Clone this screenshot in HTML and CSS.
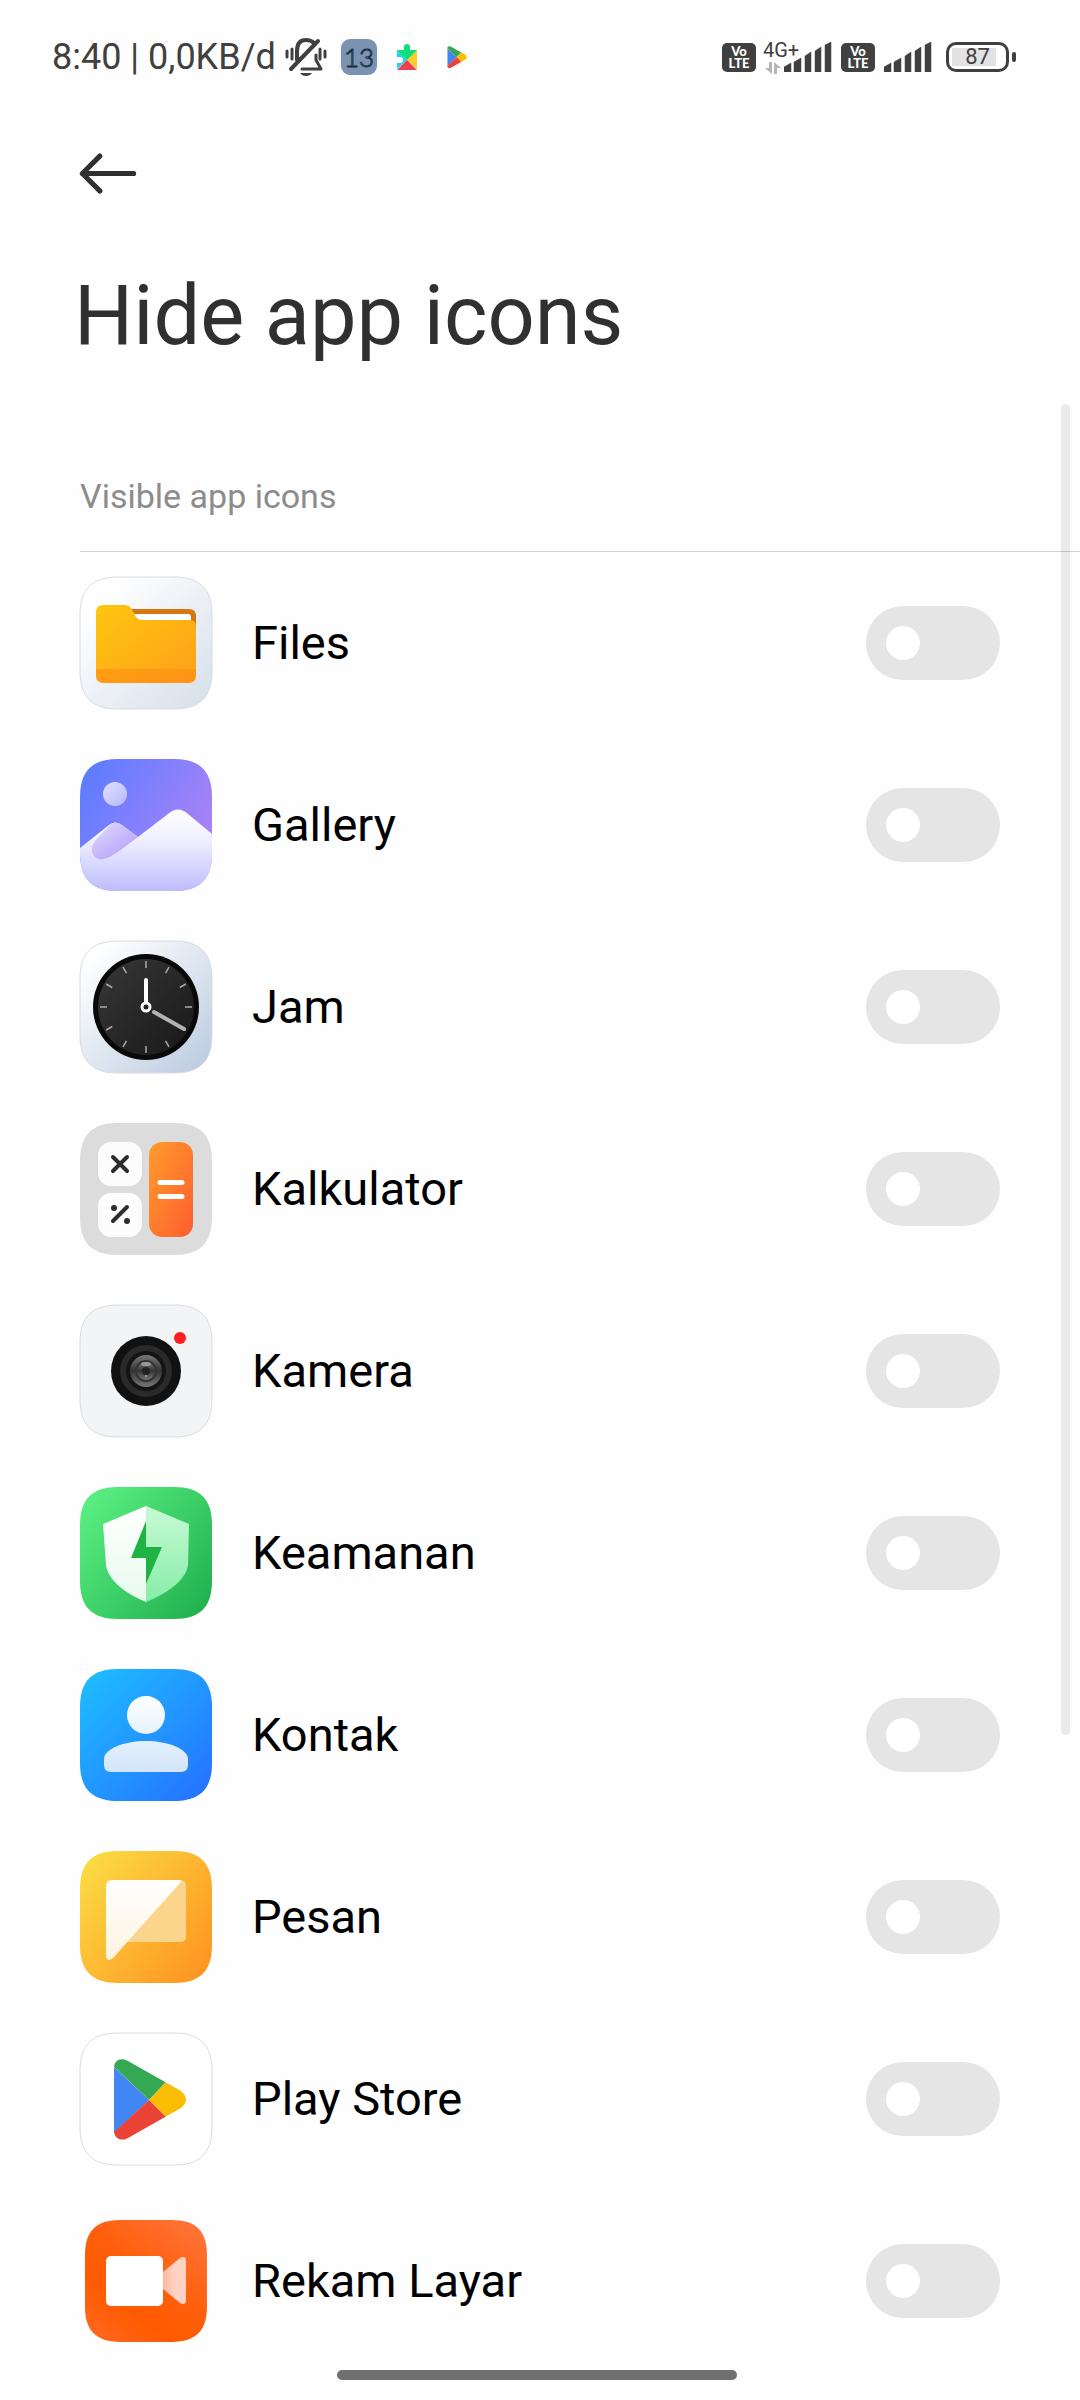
FILE: index.html
```html
<!DOCTYPE html>
<html lang="en">
<head>
  <meta charset="UTF-8" />
  <meta name="viewport" content="width=device-width, initial-scale=1.0" />
  <title>Hide app icons</title>
  <link rel="stylesheet" href="styles.css">
</head>
<body>
  <!-- Shared icon shapes -->
  <svg class="defs" aria-hidden="true">
    <defs>
      <path id="tile" d="M0 38C0 12 12 0 38 0H94C120 0 132 12 132 38V94C132 120 120 132 94 132H38C12 132 0 120 0 94Z" />
      <clipPath id="tileClip"><use href="#tile" /></clipPath>
      <clipPath id="playClip">
        <path d="M34 35C34 27 41 24 48 28L101 58Q111 66.500 101 75L48 105C41 109 34 105 34 98Z" />
      </clipPath>
      <symbol id="play" viewBox="30 22 80 88">
        <g clip-path="url(#playClip)">
          <path d="M34 34L69 67L34 100Z" fill="#4285f4" />
          <path d="M30 22H60L86 49L69 67L30 30Z" fill="#34a853" />
          <path d="M86 49H115V84H86L69 67Z" fill="#fbbc04" />
          <path d="M69 67L86 84L60 112H30V103Z" fill="#ea4335" />
        </g>
      </symbol>
      <symbol id="signal" viewBox="0 0 48 30">
        <path d="M0 30V25L7 21V30ZM10 30V20L17 16V30ZM21 30V14L27 10V30ZM31 30V9L37 5V30ZM41 30V3L47 0V30Z" fill="#404040" stroke="#404040" stroke-width="0.500" stroke-linejoin="round" />
      </symbol>
    </defs>
  </svg>

  <div class="status-bar">
    <div class="status-left">
      <span class="clock">8:40 | 0,0KB/d</span>
      <svg class="bell" viewBox="0 0 42 38" fill="none" stroke="#404040" stroke-width="4" stroke-linecap="round">
        <path d="M6 31L33 3" />
        <path d="M12 22V13C12 5 16 2 21 2C25 2 27 3 29 5" />
        <path d="M31 17V22L36 31H17" stroke-linejoin="round" stroke-width="3" />
        <path d="M15 35H27Q25 38 21 38Q17 38 15 35Z" fill="#404040" stroke="none" />
        <path d="M2 13V19M7 11V21M35 11V21M40 13V19" stroke-width="3" />
      </svg>
      <svg class="thirteen" viewBox="0 0 36 36">
        <rect width="36" height="36" rx="9" fill="#7b92b3" />
        <text x="18" y="28" text-anchor="middle" class="thirteen-text">13</text>
      </svg>
      <svg class="services" viewBox="0 0 22 26">
        <path d="M1 6H8V3A3 3 0 0 1 14 3V6H21V16L11 16L1 7Z" fill="#0fe07c" />
        <path d="M1 7L11 16L1 25V19H4A3 3 0 0 0 4 13H1Z" fill="#18d5f5" />
        <path d="M21 6V25L11 16Z" fill="#ffca2b" />
        <path d="M11 16L21 26H1Z" fill="#ee3f4e" />
      </svg>
      <svg class="play-small"><use href="#play" /></svg>
    </div>
    <div class="status-right">
      <span class="volte">Vo<br>LTE</span>
      <div class="network">
        <span class="network-type">4G+</span>
        <svg class="arrows" viewBox="0 0 16 12" fill="#b5b5b5">
          <path d="M7 0V12L0 6H4V0ZM9 12V0L16 6H12V12Z" />
        </svg>
      </div>
      <svg class="signal signal-first"><use href="#signal" /></svg>
      <span class="volte">Vo<br>LTE</span>
      <svg class="signal"><use href="#signal" /></svg>
      <div class="battery"><span class="battery-level">87</span></div>
    </div>
  </div>

  <header>
    <button class="back" type="button" aria-label="Back">
      <svg viewBox="0 0 56 40" fill="none" stroke="#303030" stroke-width="5" stroke-linecap="round" stroke-linejoin="round">
        <path d="M20 3L3 20L20 37M3 20H53" />
      </svg>
    </button>
    <h1>Hide app icons</h1>
  </header>

  <main>
    <h2>Visible app icons</h2>
    <ul class="app-list">
      <li>
        <label class="app">
          <svg class="app-icon" viewBox="0 0 132 132">
            <linearGradient id="filesBg" x1="0" y1="0" x2="1" y2="1"><stop offset="0.150" stop-color="#fff" /><stop offset="1" stop-color="#d5deea" /></linearGradient>
            <linearGradient id="folder" x1="0" y1="0" x2="1" y2="1"><stop offset="0" stop-color="#fdc60f" /><stop offset="1" stop-color="#ffa01b" /></linearGradient>
            <use href="#tile" fill="url(#filesBg)" class="outline" />
            <path d="M48 32H109Q116 32 116 39V60H48Z" fill="#d67713" />
            <path d="M52 37H108Q111 37 111 40V60H52Z" fill="#fff" />
            <path d="M16 35Q16 28 24 28H45Q49 28 51 31L56 40Q58 43 61 43H110Q116 43 116 50V98Q116 106 108 106H24Q16 106 16 98Z" fill="url(#folder)" />
            <path d="M16 92H116V98Q116 106 108 106H24Q16 106 16 98Z" fill="#ff8c14" fill-opacity="0.600" />
          </svg>
          <span class="app-name">Files</span>
          <input class="toggle" type="checkbox" role="switch">
        </label>
      </li>
      <li>
        <label class="app">
          <svg class="app-icon" viewBox="0 0 132 132">
            <linearGradient id="sky" x1="0" y1="0.100" x2="1" y2="0.700"><stop offset="0" stop-color="#5a7cff" /><stop offset="0.500" stop-color="#8580fc" /><stop offset="1" stop-color="#b083f5" /></linearGradient>
            <linearGradient id="sun" x1="0" y1="0" x2="1" y2="1"><stop offset="0" stop-color="#dfe3ff" /><stop offset="1" stop-color="#b8b5fd" /></linearGradient>
            <linearGradient id="snow" x1="0" y1="0" x2="0" y2="1"><stop offset="0" stop-color="#fff" /><stop offset="0.400" stop-color="#eeeeff" /><stop offset="1" stop-color="#bdbcfd" /></linearGradient>
            <linearGradient id="hill" x1="0" y1="0" x2="0.800" y2="1"><stop offset="0" stop-color="#e0dcff" /><stop offset="1" stop-color="#b49efb" /></linearGradient>
            <g clip-path="url(#tileClip)">
              <rect width="132" height="132" fill="url(#sky)" />
              <circle cx="35" cy="35" r="12" fill="url(#sun)" />
              <path d="M0 89L29 66Q35 61 42 66L58 78L88 55Q98 46 108 55L132 75V132H0Z" fill="url(#snow)" />
              <path d="M15 82L29 67Q35 61 42 66L58 78L42 90C31 98 25 101 19 100C11 98 10 88 15 82Z" fill="url(#hill)" />
            </g>
          </svg>
          <span class="app-name">Gallery</span>
          <input class="toggle" type="checkbox" role="switch">
        </label>
      </li>
      <li>
        <label class="app">
          <svg class="app-icon" viewBox="0 0 132 132">
            <linearGradient id="clockBg" x1="0" y1="0" x2="1" y2="1"><stop offset="0.100" stop-color="#fff" /><stop offset="1" stop-color="#b9c9df" /></linearGradient>
            <linearGradient id="face" x1="0" y1="0" x2="1" y2="1"><stop offset="0" stop-color="#373737" /><stop offset="1" stop-color="#181818" /></linearGradient>
            <use href="#tile" fill="url(#clockBg)" class="outline" />
            <circle cx="66" cy="66" r="53" fill="#090909" />
            <circle cx="66" cy="66" r="48" fill="url(#face)" />
            <g stroke="#aaa" stroke-width="1.500">
              <path id="ticks" d="M66 20V27M66 105V112M20 66H27M105 66H112" />
              <use href="#ticks" transform="rotate(30 66 66)" />
              <use href="#ticks" transform="rotate(60 66 66)" />
            </g>
            <path d="M74 71L104 88" stroke="#b4b4b4" stroke-width="4" stroke-linecap="round" />
            <path d="M66 62V39" stroke="#fff" stroke-width="4" stroke-linecap="round" />
            <circle cx="66" cy="66" r="4" fill="#222" stroke="#fff" stroke-width="3" />
          </svg>
          <span class="app-name">Jam</span>
          <input class="toggle" type="checkbox" role="switch">
        </label>
      </li>
      <li>
        <label class="app">
          <svg class="app-icon" viewBox="0 0 132 132">
            <linearGradient id="equals" x1="0" y1="0" x2="1" y2="1"><stop offset="0" stop-color="#ff9c2c" /><stop offset="1" stop-color="#ff5d2f" /></linearGradient>
            <use href="#tile" fill="#dcdcdc" />
            <rect x="18" y="19" width="44" height="44" rx="13" fill="#fcfcfc" />
            <rect x="18" y="70" width="44" height="44" rx="13" fill="#fcfcfc" />
            <rect x="69" y="19" width="44" height="95" rx="13" fill="url(#equals)" />
            <path d="M80 59.500H102M80 73.500H102" stroke="#fff" stroke-width="5" stroke-linecap="round" />
            <path d="M33 34L47 48M47 34L33 48M33 98L47 84" stroke="#2d2d2d" stroke-width="4" stroke-linecap="round" />
            <circle cx="34" cy="85" r="3" fill="#2d2d2d" />
            <circle cx="47" cy="98" r="3" fill="#2d2d2d" />
          </svg>
          <span class="app-name">Kalkulator</span>
          <input class="toggle" type="checkbox" role="switch">
        </label>
      </li>
      <li>
        <label class="app">
          <svg class="app-icon" viewBox="0 0 132 132">
            <linearGradient id="glass" x1="0" y1="0" x2="0" y2="1"><stop offset="0" stop-color="#777" /><stop offset="0.500" stop-color="#333" /><stop offset="1" stop-color="#777" /></linearGradient>
            <use href="#tile" fill="#f3f4f6" class="outline" />
            <circle cx="66" cy="66" r="35" fill="#111" />
            <circle cx="66" cy="66" r="26" fill="#2a2a2a" />
            <circle cx="66" cy="66" r="20" fill="#141414" />
            <circle cx="66" cy="66" r="16" fill="url(#glass)" />
            <circle cx="66" cy="66" r="11" fill="#333" />
            <circle cx="66" cy="66" r="9" fill="url(#glass)" />
            <circle cx="66" cy="66" r="4" fill="#222" />
            <ellipse cx="66" cy="59" rx="5" ry="2" fill="#999" />
            <circle cx="66" cy="71" r="1" fill="#aaa" />
            <circle cx="100" cy="33" r="6" fill="#ff1d1d" />
          </svg>
          <span class="app-name">Kamera</span>
          <input class="toggle" type="checkbox" role="switch">
        </label>
      </li>
      <li>
        <label class="app">
          <svg class="app-icon" viewBox="0 0 132 132">
            <linearGradient id="securityBg" x1="0" y1="0.100" x2="1" y2="0.900"><stop offset="0" stop-color="#5cf083" /><stop offset="1" stop-color="#20b04e" /></linearGradient>
            <linearGradient id="shieldLeft" x1="0" y1="0" x2="0" y2="1"><stop offset="0" stop-color="#fff" /><stop offset="1" stop-color="#e8faee" /></linearGradient>
            <linearGradient id="shieldRight" x1="0" y1="0" x2="0" y2="1"><stop offset="0" stop-color="#c8fad5" /><stop offset="1" stop-color="#86eda7" /></linearGradient>
            <use href="#tile" fill="url(#securityBg)" />
            <path d="M66 19L23 37L26 78C28 94 48 108 66 115Z" fill="url(#shieldLeft)" />
            <path d="M66 19L109 37L108 78C106 94 84 108 66 115Z" fill="url(#shieldRight)" />
            <path d="M66 34L51 71H66V97L82 60H66Z" fill="#1fb344" />
          </svg>
          <span class="app-name">Keamanan</span>
          <input class="toggle" type="checkbox" role="switch">
        </label>
      </li>
      <li>
        <label class="app">
          <svg class="app-icon" viewBox="0 0 132 132">
            <linearGradient id="contactBg" x1="0" y1="0" x2="1" y2="1"><stop offset="0" stop-color="#1ec0ff" /><stop offset="1" stop-color="#256fff" /></linearGradient>
            <linearGradient id="head" x1="0" y1="0" x2="0" y2="1"><stop offset="0" stop-color="#fff" /><stop offset="1" stop-color="#e6f2fd" /></linearGradient>
            <linearGradient id="shoulders" x1="0" y1="0" x2="0" y2="1"><stop offset="0" stop-color="#e3f0fc" /><stop offset="1" stop-color="#d3e5fb" /></linearGradient>
            <use href="#tile" fill="url(#contactBg)" />
            <circle cx="66" cy="46" r="19" fill="url(#head)" />
            <path d="M24 90C24 80 44 72 66 72C88 72 108 80 108 90V96Q108 103 101 103H31Q24 103 24 96Z" fill="url(#shoulders)" />
          </svg>
          <span class="app-name">Kontak</span>
          <input class="toggle" type="checkbox" role="switch">
        </label>
      </li>
      <li>
        <label class="app">
          <svg class="app-icon" viewBox="0 0 132 132">
            <linearGradient id="messageBg" x1="0" y1="0.100" x2="1" y2="0.900"><stop offset="0" stop-color="#fbdc44" /><stop offset="1" stop-color="#ff9320" /></linearGradient>
            <linearGradient id="fold" x1="0" y1="0" x2="0" y2="1"><stop offset="0" stop-color="#fff" /><stop offset="1" stop-color="#fff3df" /></linearGradient>
            <use href="#tile" fill="url(#messageBg)" />
            <path d="M98 29H100Q106 29 106 35V85Q106 91 100 91H46Z" fill="#fbd58c" />
            <path d="M32 29H99Q103 29 100 32L33 107Q26 112 26 104V35Q26 29 32 29Z" fill="url(#fold)" />
          </svg>
          <span class="app-name">Pesan</span>
          <input class="toggle" type="checkbox" role="switch">
        </label>
      </li>
      <li>
        <label class="app">
          <svg class="app-icon" viewBox="0 0 132 132">
            <use href="#tile" fill="#fff" class="outline" />
            <use href="#play" x="30" y="22" width="80" height="88" />
          </svg>
          <span class="app-name">Play Store</span>
          <input class="toggle" type="checkbox" role="switch">
        </label>
      </li>
      <li>
        <label class="app">
          <svg class="app-icon" viewBox="0 0 132 132">
            <linearGradient id="recordBg" x1="0.100" y1="1" x2="0.900" y2="0"><stop offset="0" stop-color="#ff671f" /><stop offset="0.300" stop-color="#ff5a00" /><stop offset="0.550" stop-color="#ff5f0c" /><stop offset="1" stop-color="#ff7439" /></linearGradient>
            <linearGradient id="lens" x1="0" y1="0" x2="1" y2="0"><stop offset="0" stop-color="#ffb79c" /><stop offset="0.500" stop-color="#ffd3c4" /></linearGradient>
            <use href="#tile" fill="url(#recordBg)" transform="translate(5 5) scale(0.924)" />
            <path d="M83 57L100 43Q106 40 106 46V85Q106 91 100 88L83 74Z" fill="url(#lens)" />
            <rect x="26" y="41" width="57" height="50" rx="5" fill="#fff" />
          </svg>
          <span class="app-name">Rekam Layar</span>
          <input class="toggle" type="checkbox" role="switch">
        </label>
      </li>
    </ul>
  </main>

  <div class="scrollbar"></div>
  <div class="home-bar"></div>
</body>
</html>
```

FILE: styles.css
```css
:root {
  --text-dark: #303030;
  --status: #404040;
  --muted: #8c8c8c;
  --track: #e5e5e5;
  --side: 80px;
}

* {
  box-sizing: border-box;
}

body {
  position: relative;
  margin: 0;
  min-height: 100vh;
  font-family: Roboto, Inter, sans-serif;
  background: #fefefe;
  color: #000;
}

svg {
  display: block;
  flex-shrink: 0;
}

.defs {
  position: absolute;
  width: 0;
  height: 0;
}

/* Status bar */
.status-bar {
  display: flex;
  justify-content: space-between;
  align-items: center;
  height: 114px;
  padding: 0 64px 0 52px;
  color: var(--status);
}

.status-left,
.status-right {
  display: flex;
  align-items: center;
}

.clock {
  font-size: 36px;
  line-height: 44px;
  white-space: nowrap;
}

.bell {
  width: 42px;
  height: 38px;
  margin-left: 9px;
}

.thirteen {
  width: 36px;
  height: 36px;
  margin-left: 14px;
}

.thirteen-text {
  font-family: Lato, sans-serif;
  font-size: 26px;
  font-weight: 300;
  fill: #9fe6d8;
  stroke: #12303c;
  stroke-width: 1px;
}

.services {
  width: 22px;
  height: 26px;
  margin-left: 19px;
}

.play-small {
  width: 22px;
  height: 24px;
  margin-left: 28px;
}

.volte {
  width: 34px;
  height: 29px;
  padding-top: 2px;
  border-radius: 5px;
  background: var(--status);
  color: #fff;
  font-family: Lato, sans-serif;
  font-size: 13px;
  line-height: 12px;
  font-weight: 900;
  text-align: center;
}

.network {
  width: 28px;
  height: 34px;
  margin-left: 7px;
}

.network-type {
  display: block;
  font-size: 20px;
  line-height: 20px;
}

.arrows {
  width: 16px;
  height: 12px;
  margin: 2px 0 0 2px;
}

.signal {
  width: 48px;
  height: 30px;
  margin-left: 9px;
}

.signal-first {
  margin: 0 9px 0 -7px;
}

.battery {
  position: relative;
  width: 63px;
  height: 30px;
  margin: 0 7px 0 14px;
  padding: 3px;
  border: 3px solid var(--status);
  border-radius: 10px;
}

.battery::after {
  content: "";
  position: absolute;
  top: 7px;
  right: -10px;
  width: 4px;
  height: 10px;
  border-radius: 2px;
  background: var(--status);
}

.battery-level {
  display: block;
  height: 18px;
  background: linear-gradient(to right, #e2e2e2 87%, transparent 87%);
  font-size: 22px;
  line-height: 18px;
  text-align: center;
}

/* Page header */
.back {
  display: flex;
  align-items: center;
  height: 118px;
  margin: 0;
  padding: 0 79px;
  border: none;
  background: none;
  cursor: pointer;
}

.back svg {
  width: 58px;
  height: 41px;
}

h1 {
  margin: 0;
  padding: 34px 74px 0;
  color: var(--text-dark);
  font-size: 83px;
  line-height: 100px;
  font-weight: 400;
}

h2 {
  margin: 0 0 0 var(--side);
  padding: 110px 0 34px;
  border-bottom: 1px solid #d2d2d2;
  color: var(--muted);
  font-size: 34px;
  line-height: 41px;
  font-weight: 400;
}

/* App list */
.app-list {
  margin: 0;
  padding: 0 var(--side);
  list-style: none;
}

.app {
  display: flex;
  align-items: center;
  height: 182px;
  cursor: pointer;
}

.app-icon {
  width: 132px;
  height: 132px;
  overflow: visible;
}

.outline {
  stroke: #d9dce0;
  stroke-width: 1px;
}

.app-name {
  flex: 1;
  margin-left: 40px;
  font-size: 47px;
  line-height: 58px;
}

.toggle {
  appearance: none;
  display: flex;
  align-items: center;
  flex-shrink: 0;
  width: 134px;
  height: 74px;
  margin: 0;
  padding: 0 20px;
  border-radius: 37px;
  background: var(--track);
  cursor: pointer;
}

.toggle::before {
  content: "";
  width: 34px;
  height: 34px;
  border-radius: 50%;
  background: #fff;
}

.toggle:checked {
  justify-content: flex-end;
  background: #3482ff;
}

/* Overlays */
.scrollbar {
  position: absolute;
  top: 404px;
  right: 10px;
  width: 9px;
  height: 1331px;
  border-radius: 5px;
  background: rgba(0, 0, 0, 0.08);
}

.home-bar {
  position: fixed;
  bottom: 20px;
  left: 50%;
  width: 400px;
  height: 10px;
  margin-left: -203px;
  border-radius: 5px;
  background: #707070;
}
```
